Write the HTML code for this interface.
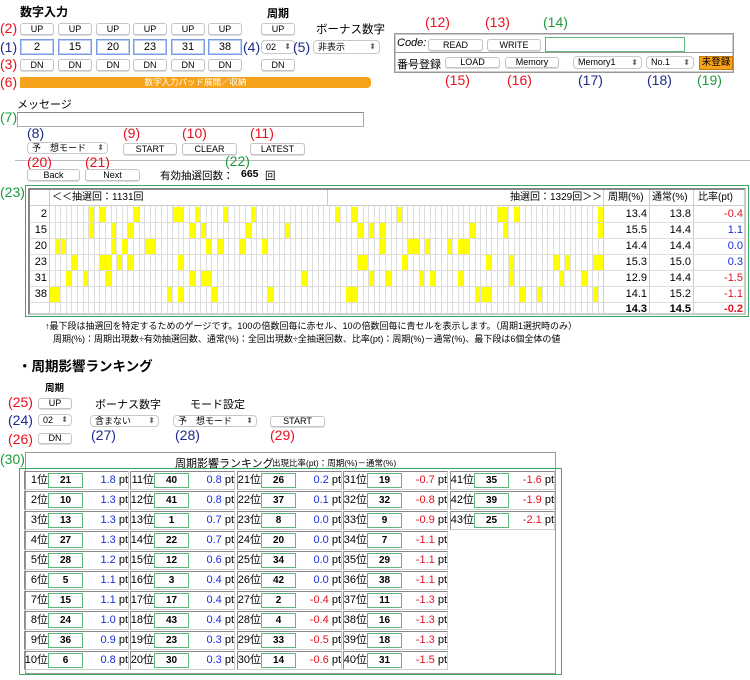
<!DOCTYPE html>
<html><head><meta charset="utf-8">
<style>
*{box-sizing:border-box;margin:0;padding:0}
body{width:750px;height:680px;background:#fff;position:relative;overflow:hidden;font-family:"Liberation Sans","Noto Sans CJK JP",sans-serif;color:#000}
.a{position:absolute;white-space:nowrap}
.btn{position:absolute;background:#fff;border:1px solid #c4c4c4;border-radius:3px;font-size:9px;text-align:center;box-shadow:0 1px 0 #ddd}
.inp{position:absolute;background:#fff;border:1px solid #7b9be6;font-size:11px;text-align:center;box-shadow:0 0 0 1px #bcd0f5 inset}
.sel{position:absolute;background:#fff;border:1px solid #c8c8c8;border-radius:4px;font-size:9px;padding-left:4px}
.sel:after{content:"\2B0D";position:absolute;right:3px;top:0;font-size:8px;color:#666}
.r{color:#e8101e}.n{color:#1c2a8c}.g{color:#1a9c3a}
.lb{position:absolute;font-size:14px;line-height:14px;white-space:nowrap}
</style></head><body>
<div class="a" style="left:20px;top:3px;font-size:12px;font-weight:bold">数字入力</div>
<div class="a" style="left:267px;top:5px;font-size:11px;font-weight:bold">周期</div>
<div class="a" style="left:316px;top:21px;font-size:11.5px">ボーナス数字</div>
<div id="top"></div>
<div class="btn" style="left:261px;top:23px;width:34px;height:12px;line-height:10px">UP</div>
<div class="sel" style="left:261px;top:40px;width:34px;height:14px;line-height:12px">02</div>
<div class="btn" style="left:261px;top:59px;width:34px;height:12px;line-height:10px">DN</div>
<div class="sel" style="left:313px;top:40px;width:67px;height:14px;line-height:12px">非表示</div>
<div class="a" style="left:20px;top:77px;width:351px;height:11px;background:#f7a21b;border-radius:0 4px 4px 0;color:#fff;font-size:8.5px;text-align:center;line-height:11px">数字入力パッド展開／収納</div>
<div class="lb r" style="left:0;top:21px">(2)</div>
<div class="lb n" style="left:0;top:40px">(1)</div>
<div class="lb r" style="left:0;top:57px">(3)</div>
<div class="lb r" style="left:0;top:75px">(6)</div>
<div class="lb n" style="left:243px;top:40px">(4)</div>
<div class="lb n" style="left:293px;top:40px">(5)</div>

<div class="a" style="left:394px;top:33px;width:340px;height:40px;border:1px solid #999;box-shadow:0 0 0 1px #ccc inset"></div>
<div class="a" style="left:394px;top:52px;width:340px;height:1px;background:#999"></div>
<div class="a" style="left:397px;top:37px;font-size:11px;font-style:italic">Code:</div>
<div class="btn" style="left:428px;top:39px;width:55px;height:12px;line-height:10px">READ</div>
<div class="btn" style="left:487px;top:39px;width:54px;height:12px;line-height:10px">WRITE</div>
<div class="a" style="left:545px;top:37px;width:140px;height:15px;border:1px solid #5cb87a"></div>
<div class="a" style="left:397px;top:56px;font-size:11px">番号登録：</div>
<div class="btn" style="left:445px;top:57px;width:55px;height:11px;line-height:9px">LOAD</div>
<div class="btn" style="left:505px;top:57px;width:54px;height:11px;line-height:9px">Memory</div>
<div class="sel" style="left:573px;top:56px;width:69px;height:13px;line-height:11px">Memory1</div>
<div class="sel" style="left:646px;top:56px;width:48px;height:13px;line-height:11px">No.1</div>
<div class="a" style="left:699px;top:56px;width:34px;height:14px;background:#f7a21b;border:1px solid #c07a10;font-size:9.5px;text-align:center;line-height:12px">未登録</div>
<div class="lb r" style="left:425px;top:15px">(12)</div>
<div class="lb r" style="left:485px;top:15px">(13)</div>
<div class="lb g" style="left:543px;top:15px">(14)</div>
<div class="lb r" style="left:445px;top:73px">(15)</div>
<div class="lb r" style="left:507px;top:73px">(16)</div>
<div class="lb n" style="left:578px;top:73px">(17)</div>
<div class="lb n" style="left:647px;top:73px">(18)</div>
<div class="lb g" style="left:697px;top:73px">(19)</div>

<div class="a" style="left:17px;top:96px;font-size:11px">メッセージ</div>
<div class="a" style="left:17px;top:112px;width:347px;height:15px;border:1px solid #aaa;border-top-color:#888"></div>
<div class="lb g" style="left:0;top:110px">(7)</div>
<div class="lb n" style="left:27px;top:126px">(8)</div>
<div class="sel" style="left:27px;top:142px;width:81px;height:12px;line-height:10px">予　想モード</div>
<div class="lb r" style="left:123px;top:126px">(9)</div>
<div class="btn" style="left:123px;top:143px;width:54px;height:12px;line-height:10px">START</div>
<div class="lb r" style="left:182px;top:126px">(10)</div>
<div class="btn" style="left:182px;top:143px;width:55px;height:12px;line-height:10px">CLEAR</div>
<div class="lb r" style="left:250px;top:126px">(11)</div>
<div class="btn" style="left:250px;top:143px;width:55px;height:12px;line-height:10px">LATEST</div>
<div class="a" style="left:15px;top:160px;width:735px;height:1px;background:#bbb"></div>
<div class="lb r" style="left:27px;top:155px">(20)</div>
<div class="btn" style="left:27px;top:169px;width:53px;height:12px;line-height:10px">Back</div>
<div class="lb r" style="left:85px;top:155px">(21)</div>
<div class="btn" style="left:85px;top:169px;width:55px;height:12px;line-height:10px">Next</div>
<div class="lb g" style="left:225px;top:154px">(22)</div>
<div class="a" style="left:160px;top:168px;font-size:10.5px">有効抽選回数：</div>
<div class="a" style="left:241px;top:168px;font-size:10.5px;font-weight:bold">665</div>
<div class="a" style="left:265px;top:168px;font-size:10.5px">回</div>

<div class="lb g" style="left:0;top:185px">(23)</div>
<div class="a" style="left:25px;top:185px;width:724px;height:132px;border:1px solid #3aaa5a"></div>
<div id="grid" class="a" style="left:28px;top:188px;width:718px;height:127px;border:2px solid #888;border-right-color:#ccc;border-bottom-color:#ccc"></div>
<div class="a" style="left:45px;top:319px;font-size:9px">↑最下段は抽選回を特定するためのゲージです。100の倍数回毎に赤セル、10の倍数回毎に青セルを表示します。（周期1選択時のみ）</div>
<div class="a" style="left:53px;top:332px;font-size:9px">周期(%)：周期出現数÷有効抽選回数、通常(%)：全回出現数÷全抽選回数、比率(pt)：周期(%)－通常(%)、最下段は6個全体の値</div>

<div class="a" style="left:18px;top:355px;font-size:13.5px;font-weight:bold">・周期影響ランキング</div>
<div class="a" style="left:45px;top:380px;font-size:9.5px;font-weight:bold">周期</div>
<div class="lb r" style="left:8px;top:395px">(25)</div>
<div class="btn" style="left:38px;top:398px;width:34px;height:11px;line-height:9px">UP</div>
<div class="lb n" style="left:8px;top:413px">(24)</div>
<div class="sel" style="left:38px;top:414px;width:34px;height:12px;line-height:10px">02</div>
<div class="lb r" style="left:8px;top:432px">(26)</div>
<div class="btn" style="left:38px;top:433px;width:34px;height:11px;line-height:9px">DN</div>
<div class="a" style="left:95px;top:396px;font-size:11px">ボーナス数字</div>
<div class="sel" style="left:90px;top:415px;width:69px;height:12px;line-height:10px">含まない</div>
<div class="lb n" style="left:91px;top:428px">(27)</div>
<div class="a" style="left:190px;top:396px;font-size:11px">モード設定</div>
<div class="sel" style="left:173px;top:415px;width:84px;height:12px;line-height:10px">予　想モード</div>
<div class="lb n" style="left:175px;top:428px">(28)</div>
<div class="btn" style="left:270px;top:416px;width:55px;height:11px;line-height:9px">START</div>
<div class="lb r" style="left:270px;top:428px">(29)</div>
<div class="lb g" style="left:0;top:452px">(30)</div>
<div class="a" style="left:25px;top:452px;width:531px;height:222px;border:1px solid #999"></div>
<div class="a" style="left:175px;top:455px;font-size:11px">周期影響ランキング</div>
<div class="a" style="left:272px;top:457px;font-size:8.5px">出現比率(pt)：周期(%)－通常(%)</div>
<div class="a" style="left:19px;top:468px;width:543px;height:207px;border:1px solid #3aaa5a"></div>
<div id="rank"></div>

<script>
var t=document.getElementById('top'),h='';
var xs=[20,58,96,133,171,208],nums=[2,15,20,23,31,38];
xs.forEach(function(x,i){
h+='<div class="btn" style="left:'+x+'px;top:23px;width:34px;height:12px;line-height:10px">UP</div>';
h+='<div class="inp" style="left:'+x+'px;top:39px;width:34px;height:16px;line-height:14px">'+nums[i]+'</div>';
h+='<div class="btn" style="left:'+x+'px;top:59px;width:34px;height:12px;line-height:10px">DN</div>';});
t.innerHTML=h;
// grid
var g=document.getElementById('grid');h='';
var rows=[['2',[7,9,15,22,23,26,31,36,51,54,62,80,81,83,98],'13.4','13.8','-0.4'],
['15',[7,11,14,25,27,35,42,55,57,59,75,81,98],'15.5','14.4','1.1'],
['20',[1,2,11,13,17,18,28,30,34,38,59,64,65,67,71,73,74],'14.4','14.4','0.0'],
['23',[4,9,10,12,14,23,55,56,63,78,82,90,92,97,98],'15.3','15.0','0.3'],
['31',[3,6,10,25,27,28,45,57,60,66,68,73,82,91,95],'12.9','14.4','-1.5'],
['38',[0,1,21,23,29,39,53,54,76,77,78,84,87,97],'14.1','15.2','-1.1']];
var gx=19,cw=5.6,N=99,oy=-1;
function L(s){h+='<div class="a" style="'+s+'"></div>';}
// header
h+='<div class="a" style="left:22px;top:0;font-size:10px;line-height:15px">＜＜抽選回：1131回</div>';
h+='<div class="a" style="left:480px;top:0;font-size:10px;line-height:15px">抽選回：1329回＞＞</div>';
h+='<div class="a" style="left:578px;top:0;font-size:10px;line-height:15px">周期(%)</div>';
h+='<div class="a" style="left:622px;top:0;font-size:10px;line-height:15px">通常(%)</div>';
h+='<div class="a" style="left:668px;top:0;font-size:10px;line-height:15px">比率(pt)</div>';
L('left:0;top:15px;width:714px;height:1px;background:#ccc');
L('left:'+gx+'px;top:0;width:1px;height:123px;background:#ccc');
L('left:297px;top:0;width:1px;height:15px;background:#ccc');
[573,619,663].forEach(function(x){L('left:'+x+'px;top:0;width:1px;height:123px;background:#ccc')});
for(var c=1;c<N;c++){L('left:'+(gx+c*cw).toFixed(1)+'px;top:16px;width:1px;height:107px;background:#ddd');}
rows.forEach(function(r,i){var y=16+i*16;
L('left:0;top:'+(y+16)+'px;width:714px;height:1px;background:#ddd');
h+='<div class="a" style="left:0;width:19px;text-align:right;padding-right:2px;top:'+y+'px;font-size:11px;line-height:16px">'+r[0]+'</div>';
r[1].forEach(function(c){L('left:'+(gx+c*cw+0.5).toFixed(1)+'px;top:'+(y+1)+'px;width:5.2px;height:15px;background:#ffff00');});
h+='<div class="a" style="left:573px;width:44px;text-align:right;top:'+y+'px;font-size:11px;line-height:16px">'+r[2]+'</div>';
h+='<div class="a" style="left:619px;width:42px;text-align:right;top:'+y+'px;font-size:11px;line-height:16px">'+r[3]+'</div>';
h+='<div class="a" style="left:663px;width:50px;text-align:right;top:'+y+'px;font-size:11px;line-height:16px;color:'+(r[4][0]=='-'?'#e8101e':'#1a2ee0')+'">'+r[4]+'</div>';});
var y=16+96;
h+='<div class="a" style="left:573px;width:44px;text-align:right;top:'+y+'px;font-size:11px;font-weight:bold;line-height:14px">14.3</div>';
h+='<div class="a" style="left:619px;width:42px;text-align:right;top:'+y+'px;font-size:11px;font-weight:bold;line-height:14px">14.5</div>';
h+='<div class="a" style="left:663px;width:50px;text-align:right;top:'+y+'px;font-size:11px;font-weight:bold;line-height:14px;color:#e8101e">-0.2</div>';
g.innerHTML=h;
// ranking
var d=[[21,1.8],[10,1.3],[13,1.3],[27,1.3],[28,1.2],[5,1.1],[15,1.1],[24,1.0],[36,0.9],[6,0.8],
[40,0.8],[41,0.8],[1,0.7],[22,0.7],[12,0.6],[3,0.4],[17,0.4],[43,0.4],[23,0.3],[30,0.3],
[26,0.2],[37,0.1],[8,0.0],[20,0.0],[34,0.0],[42,0.0],[2,-0.4],[4,-0.4],[33,-0.5],[14,-0.6],
[19,-0.7],[32,-0.8],[9,-0.9],[7,-1.1],[29,-1.1],[38,-1.1],[11,-1.3],[16,-1.3],[18,-1.3],[31,-1.5],
[35,-1.6],[39,-1.9],[25,-2.1]];
var bx=[24,130,237,343,450];h='';
d.forEach(function(e,i){var c=Math.floor(i/10),rr=i%10,x=bx[c],y=471+rr*20;
h+='<div class="a" style="left:'+x+'px;top:'+y+'px;width:105px;height:19px;border:1px solid #888;border-right-color:#ccc;border-bottom-color:#ccc"></div>';
h+='<div class="a" style="left:'+x+'px;top:'+y+'px;width:24px;text-align:right;font-size:11px;line-height:19px">'+(i+1)+'位</div>';
h+='<div class="a" style="left:'+(x+24)+'px;top:'+(y+2)+'px;width:35px;height:15px;border:1px solid #5cb87a;text-align:center;font-size:10px;font-weight:bold;line-height:13px">'+e[0]+'</div>';
h+='<div class="a" style="left:'+x+'px;top:'+y+'px;width:104px;text-align:right;font-size:11px;line-height:19px"><span style="color:'+(e[1]<0?'#e8101e':'#1a2ee0')+'">'+e[1].toFixed(1)+'</span> pt</div>';});
document.getElementById('rank').innerHTML=h;
</script>
</body></html>
